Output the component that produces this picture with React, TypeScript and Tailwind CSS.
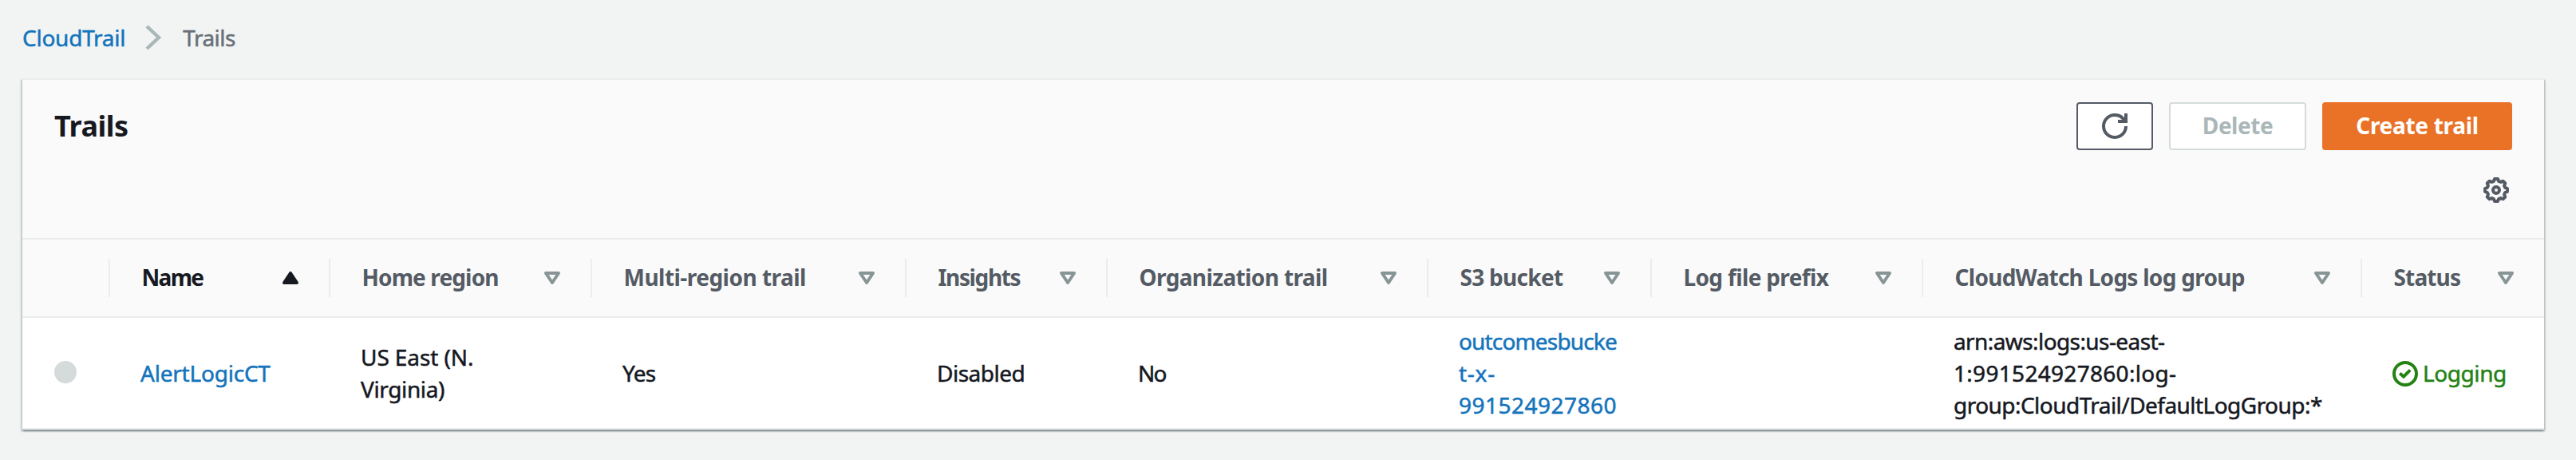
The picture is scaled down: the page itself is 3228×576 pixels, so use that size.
import { clsx } from "clsx";

type Line = { text: string; tracking: string };

type Column = {
  label: string;
  tracking: string;
  sorted?: boolean;
};

const GRID =
  "grid grid-cols-[110px_276px_328px_394px_252px_402px_280px_340px_550px_228px]";

const columns: Column[] = [
  { label: "Name", tracking: "tracking-[-1.7px]", sorted: true },
  { label: "Home region", tracking: "tracking-[-0.87px]" },
  { label: "Multi-region trail", tracking: "tracking-[-0.52px]" },
  { label: "Insights", tracking: "tracking-[-1.35px]" },
  { label: "Organization trail", tracking: "tracking-[-0.62px]" },
  { label: "S3 bucket", tracking: "tracking-[-0.7px]" },
  { label: "Log file prefix", tracking: "tracking-[-0.65px]" },
  { label: "CloudWatch Logs log group", tracking: "tracking-[-0.72px]" },
  { label: "Status", tracking: "tracking-[-0.85px]" },
];

const cells: { lines: Line[]; link?: boolean }[] = [
  { lines: [{ text: "AlertLogicCT", tracking: "tracking-[-0.22px]" }], link: true },
  {
    lines: [
      { text: "US East (N.", tracking: "tracking-[-0.09px]" },
      { text: "Virginia)", tracking: "tracking-[-0.37px]" },
    ],
  },
  { lines: [{ text: "Yes", tracking: "tracking-[-0.75px]" }] },
  { lines: [{ text: "Disabled", tracking: "tracking-[-0.5px]" }] },
  { lines: [{ text: "No", tracking: "tracking-[-1.8px]" }] },
  {
    lines: [
      { text: "outcomesbucke", tracking: "tracking-[-0.84px]" },
      { text: "t-x-", tracking: "tracking-[0.75px]" },
      { text: "991524927860", tracking: "tracking-[0.48px]" },
    ],
    link: true,
  },
  { lines: [] },
  {
    lines: [
      { text: "arn:aws:logs:us-east-", tracking: "tracking-[-0.59px]" },
      { text: "1:991524927860:log-", tracking: "tracking-[0.3px]" },
      { text: "group:CloudTrail/DefaultLogGroup:*", tracking: "tracking-[-0.54px]" },
    ],
  },
];

function ChevronIcon() {
  return (
    <svg className="ml-[25px] h-9 w-6 shrink-0" viewBox="0 0 24 36" fill="none">
      <path d="M2 4 17 18 2 32" stroke="#aab7b8" strokeWidth="4.4" />
    </svg>
  );
}

function RefreshIcon() {
  return (
    <svg className="size-8" viewBox="0 0 16 16" fill="none" stroke="#545b64" strokeWidth="2">
      <path d="M10 5h5V0" />
      <path d="M15 8a6.96 6.96 0 0 1-7 7 6.96 6.96 0 0 1-7-7 6.96 6.96 0 0 1 7-7 6.87 6.87 0 0 1 6.3 4" />
    </svg>
  );
}

function gearOutline() {
  const points: string[] = [];
  const add = (radius: number, degrees: number) => {
    const a = ((degrees - 90) * Math.PI) / 180;
    points.push(`${(8 + radius * Math.cos(a)).toFixed(2)} ${(8 + radius * Math.sin(a)).toFixed(2)}`);
  };
  for (let tooth = 0; tooth < 8; tooth++) {
    const base = tooth * 45;
    add(7.05, base - 8);
    add(7.05, base + 8);
    add(5.75, base + 16);
    add(5.75, base + 29);
  }
  return `M${points.join("L")}Z`;
}

function GearIcon() {
  return (
    <svg className="size-8" viewBox="0 0 16 16" fill="none" stroke="#545b64" strokeWidth="2">
      <circle cx="8" cy="8" r="2" />
      <path d={gearOutline()} strokeLinejoin="round" />
    </svg>
  );
}

function SortIcon({ sorted }: { sorted?: boolean }) {
  return (
    <svg className="size-8 shrink-0" viewBox="0 0 16 16" strokeWidth="2" strokeLinejoin="round">
      {sorted ? (
        <path d="M4 11h8L8 5z" fill="#16191f" stroke="#16191f" />
      ) : (
        <path d="M4 5h8l-4 6z" fill="none" stroke="#879596" />
      )}
    </svg>
  );
}

function SuccessIcon() {
  return (
    <svg className="mt-0.5 size-8 shrink-0" viewBox="0 0 16 16" fill="none" stroke="#248214" strokeWidth="2">
      <circle cx="8" cy="8" r="7" />
      <path d="M4.6 7.7 7 9.8l4.1-4.1" />
    </svg>
  );
}

export default function App() {
  return (
    <div className="h-[576px] w-[3228px] overflow-hidden bg-[#f2f4f3] pt-[27px] pl-7 font-['Noto_Sans',sans-serif] text-[28px] leading-10 whitespace-nowrap text-[#16191f]">
      <nav className="flex h-[71px] items-start [-webkit-text-stroke-width:0.5px]">
        <div className="flex h-10 items-center">
          <a className="tracking-[-0.25px] text-[#1474bc]">CloudTrail</a>
          <ChevronIcon />
          <span className="ml-[23px] tracking-[-0.5px] text-[#687078]">Trails</span>
        </div>
      </nav>

      <main className="w-[3160px] border-t-2 border-[#eaeded] bg-white shadow-[0_2px_2px_0_rgba(0,28,36,0.3),2px_2px_2px_0_rgba(0,28,36,0.15),-2px_2px_2px_0_rgba(0,28,36,0.15)]">
        <header className="h-[200px] border-b-2 border-[#eaeded] bg-[#fafafa] px-10 pt-7">
          <div className="flex h-[60px] items-center justify-between">
            <h1 className="text-[36px] leading-[50px] font-bold tracking-[-0.48px]">Trails</h1>
            <div className="flex gap-5 font-bold">
              <button className="flex h-[60px] w-24 items-center justify-center rounded-sm border-2 border-[#545b64] bg-white">
                <RefreshIcon />
              </button>
              <button className="flex h-[60px] w-[172px] items-center justify-center rounded-sm border-2 border-[#d5dbdb] bg-white pb-0.5 tracking-[-0.48px] text-[#aab7b8]">
                Delete
              </button>
              <button className="flex h-[60px] w-[238px] items-center justify-center rounded-sm bg-[#e97227] pb-0.5 tracking-[-0.3px] text-white">
                Create trail
              </button>
            </div>
          </div>
          <div className="mt-[34px] flex justify-end pr-1">
            <GearIcon />
          </div>
        </header>

        <div className={clsx(GRID, "h-[98px] items-center border-b-2 border-[#eaeded] bg-[#fafafa]")}>
          <div className="h-12 border-r-2 border-[#eaeded]" />
          {columns.map((column, i) => (
            <div
              key={column.label}
              className={clsx(
                "flex h-12 items-center justify-between border-[#eaeded] pr-8 pl-[39.5px]",
                i < columns.length - 1 && "border-r-2",
              )}
            >
              <span
                className={clsx(
                  "pb-0.5 font-bold",
                  column.tracking,
                  column.sorted ? "text-[#16191f]" : "text-[#545b64]",
                )}
              >
                {column.label}
              </span>
              <SortIcon sorted={column.sorted} />
            </div>
          ))}
        </div>

        <div
          className={clsx(
            GRID,
            "h-[140px] items-center border-b-2 border-[#eaeded] [-webkit-text-stroke-width:0.5px]",
          )}
        >
          <div className="-mt-0.5 ml-10 size-7 rounded-full bg-[#d5dbdb]" />
          {cells.map((cell, i) => (
            <div key={i} className={clsx("pl-[38px]", cell.link && "text-[#1474bc]")}>
              {cell.lines.map((line) => (
                <div key={line.text} className={line.tracking}>
                  {line.text}
                </div>
              ))}
            </div>
          ))}
          <div className="flex items-center gap-1.5 pl-[38px] text-[#248214]">
            <SuccessIcon />
            <span className="tracking-[-0.43px]">Logging</span>
          </div>
        </div>
      </main>
    </div>
  );
}
